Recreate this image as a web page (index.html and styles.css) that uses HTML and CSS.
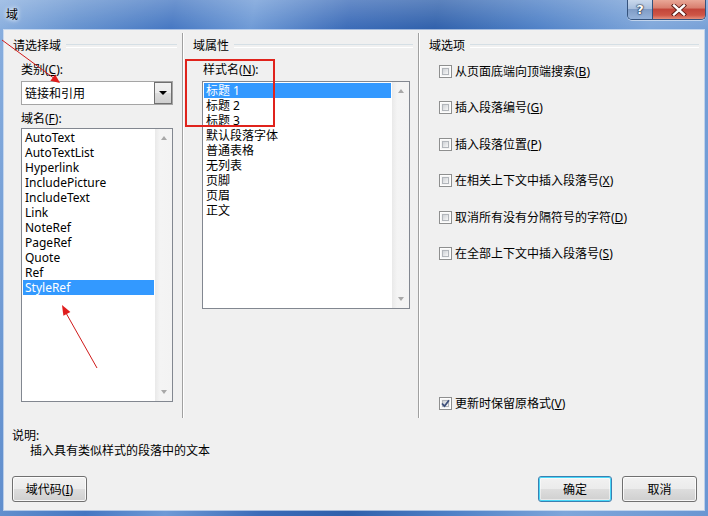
FILE: index.html
```html
<!DOCTYPE html>
<html lang="zh-CN">
<head>
<meta charset="utf-8">
<title>域</title>
<link rel="stylesheet" href="styles.css">
</head>
<body>
<div class="window">
  <div class="titlebar">
    <span class="title">域</span>
    <div class="caption-btns">
      <div class="cbtn help">?</div>
      <div class="cbtn close">
        <svg width="16" height="12" viewBox="0 0 16 12">
          <path d="M3 1.5 L13 10.5 M13 1.5 L3 10.5" stroke="#5a1a14" stroke-width="4.2" stroke-linecap="square"/>
          <path d="M3 1.5 L13 10.5 M13 1.5 L3 10.5" stroke="#ffffff" stroke-width="2.4" stroke-linecap="square"/>
        </svg>
      </div>
    </div>
  </div>
  <div class="client">
    <div class="columns">
      <section class="col col-left">
        <div class="group-head"><span>请选择域</span></div>
        <div class="label lbl-cat">类别(<u>C</u>):</div>
        <div class="combo">
          <span class="combo-text">链接和引用</span>
          <span class="combo-btn"><i class="tri-down dark"></i></span>
        </div>
        <div class="label lbl-name">域名(<u>F</u>):</div>
        <div class="listbox list-fields">
          <div class="items">
            <div class="item">AutoText</div>
            <div class="item">AutoTextList</div>
            <div class="item">Hyperlink</div>
            <div class="item">IncludePicture</div>
            <div class="item">IncludeText</div>
            <div class="item">Link</div>
            <div class="item">NoteRef</div>
            <div class="item">PageRef</div>
            <div class="item">Quote</div>
            <div class="item">Ref</div>
            <div class="item selected">StyleRef</div>
          </div>
          <div class="vscroll"><i class="tri-up"></i><i class="tri-down"></i></div>
        </div>
      </section>
      <section class="col col-mid">
        <div class="group-head"><span>域属性</span></div>
        <div class="label lbl-style">样式名(<u>N</u>):</div>
        <div class="listbox list-styles">
          <div class="items">
            <div class="item selected">标题 1</div>
            <div class="item">标题 2</div>
            <div class="item">标题 3</div>
            <div class="item">默认段落字体</div>
            <div class="item">普通表格</div>
            <div class="item">无列表</div>
            <div class="item">页脚</div>
            <div class="item">页眉</div>
            <div class="item">正文</div>
          </div>
          <div class="vscroll"><i class="tri-up"></i><i class="tri-down"></i></div>
        </div>
      </section>
      <section class="col col-right">
        <div class="group-head"><span>域选项</span></div>
        <div class="options">
          <label class="opt"><span class="cb"></span><span class="opt-text">从页面底端向顶端搜索(<u>B</u>)</span></label>
          <label class="opt"><span class="cb"></span><span class="opt-text">插入段落编号(<u>G</u>)</span></label>
          <label class="opt"><span class="cb"></span><span class="opt-text">插入段落位置(<u>P</u>)</span></label>
          <label class="opt"><span class="cb"></span><span class="opt-text">在相关上下文中插入段落号(<u>X</u>)</span></label>
          <label class="opt"><span class="cb"></span><span class="opt-text">取消所有没有分隔符号的字符(<u>D</u>)</span></label>
          <label class="opt"><span class="cb"></span><span class="opt-text">在全部上下文中插入段落号(<u>S</u>)</span></label>
        </div>
        <label class="opt opt-last"><span class="cb checked"><svg width="9" height="9" viewBox="0 0 9 9"><path d="M1 4.5 L3.5 7.2 L8 1.2" fill="none" stroke="#3d4f7a" stroke-width="1.8"/></svg></span><span class="opt-text">更新时保留原格式(<u>V</u>)</span></label>
      </section>
    </div>
    <div class="desc">
      <div class="desc-title">说明:</div>
      <div class="desc-text">插入具有类似样式的段落中的文本</div>
    </div>
    <div class="actions">
      <button class="btn">域代码(<u>I</u>)</button>
      <button class="btn default push">确定</button>
      <button class="btn">取消</button>
    </div>
  </div>
  <svg class="annotations" width="708" height="516" viewBox="0 0 708 516">
    <rect x="186" y="60" width="88" height="66" fill="none" stroke="#e0231c" stroke-width="2"/>
    <line x1="2" y1="40" x2="55" y2="79" stroke="#d01a1a" stroke-width="1"/>
    <polygon points="60,83 50.4,80.8 55.2,74.4" fill="#e01c1c"/>
    <line x1="97" y1="368" x2="66" y2="313" stroke="#d01a1a" stroke-width="1"/>
    <polygon points="62,305 70.4,311.9 63.4,315.7" fill="#e01c1c"/>
  </svg>
</div>
</body>
</html>
```

FILE: styles.css
```css
* { box-sizing: border-box; }
html, body { margin: 0; padding: 0; }
body {
  font-family: "Noto Sans", "Noto Sans CJK SC", sans-serif;
  font-size: 12px;
  line-height: 15px;
  color: #000;
  background: #fff;
}
u { text-decoration: underline; text-underline-offset: 1px; }

.window {
  position: relative;
  width: 708px;
  height: 516px;
  padding: 0 4px 6px 4px;
  display: flex;
  flex-direction: column;
  background:
    linear-gradient(to bottom, rgba(255,255,255,0.22), rgba(255,255,255,0) 30px),
    linear-gradient(100deg, #8bb0df 0%, #6592cf 10%, #4577c2 22%, #6e9ad6 32%, #3b6bb8 44%, #2f60ab 55%, #4f81c7 68%, #7ea6da 82%, #6a96d2 100%);
}

.titlebar {
  height: 30px;
  display: flex;
  align-items: flex-start;
}
.title {
  margin: 7px 0 0 2px;
  color: #000;
  text-shadow: 0 0 4px #fff, 0 0 6px rgba(255,255,255,0.8);
}
.caption-btns {
  margin-left: auto;
  margin-right: -2px;
  display: flex;
  height: 20px;
  border: 1px solid #34527c;
  border-top: none;
  border-radius: 0 0 5px 5px;
  overflow: hidden;
  box-shadow: 0 1px 0 rgba(255,255,255,0.5);
}
.cbtn {
  height: 19px;
  display: flex;
  align-items: center;
  justify-content: center;
}
.help {
  width: 25px;
  border-right: 1px solid #34527c;
  background: linear-gradient(#c9d8ec, #a9bfdd 45%, #7f9cc6 50%, #96b3da 100%);
  color: #fff;
  font-family: "DejaVu Sans", sans-serif;
  font-weight: bold;
  font-size: 13px;
  text-shadow: 0 0 2px #12213a, 0 0 1px #12213a, 0 0 1px #12213a;
}
.close {
  width: 52px;
  background: linear-gradient(#e9a797, #d98070 40%, #c3463a 50%, #cf5646 80%, #e48f7c 100%);
}

.client {
  flex: 1;
  background: #f0f0f0;
  display: flex;
  flex-direction: column;
  outline: 1px solid rgba(255,255,255,0.55);
}

.columns {
  display: flex;
  margin-top: 3px;
  height: 385px;
}
.col {
  display: flex;
  flex-direction: column;
  padding-top: 5px;
}
.col-left { width: 178px; padding-left: 9px; }
.col-mid {
  width: 236px;
  padding-left: 10px;
  border-left: 1px solid #a0a0a0;
  box-shadow: inset 1px 0 0 #fff;
}
.col-right {
  flex: 1;
  padding-left: 10px;
  padding-bottom: 7px;
  border-left: 1px solid #a0a0a0;
  box-shadow: inset 1px 0 0 #fff;
}

.group-head {
  display: flex;
  align-items: center;
  height: 15px;
  margin-right: 5px;
}
.group-head::after {
  content: "";
  flex: 1;
  margin-left: 5px;
  height: 2px;
  border-top: 1px solid #d5dfe5;
  border-bottom: 1px solid #fff;
}

.label { height: 15px; }
.lbl-cat { margin: 9px 0 0 8px; }
.lbl-name { margin: 6px 0 0 8px; }
.lbl-style { margin: 9px 0 0 10px; }

.combo {
  margin: 4px 0 0 8px;
  width: 152px;
  height: 24px;
  border: 1px solid #a5a5a5;
  background: #fff;
  display: flex;
  align-items: center;
}
.combo-text { flex: 1; padding-left: 3px; }
.combo-btn {
  width: 18px;
  height: 22px;
  border: 1px solid #707070;
  background: linear-gradient(#f2f2f2, #ebebeb 50%, #dddddd 51%, #cfcfcf);
  display: flex;
  align-items: center;
  justify-content: center;
}

.listbox {
  border: 1px solid #828790;
  background: #fff;
  display: flex;
}
.list-fields { margin: 2px 0 0 8px; width: 152px; height: 274px; }
.list-styles { margin: 4px 0 0 9px; width: 208px; height: 228px; }
.items { flex: 1; padding: 1px 1px; }
.item { height: 15px; padding-left: 2px; white-space: nowrap; }
.item.selected { background: #3399ff; color: #fff; }
.vscroll {
  width: 17px;
  background: linear-gradient(to right, #e9e9e9, #f4f4f4 30%, #f3f3f3);
  display: flex;
  flex-direction: column;
  justify-content: space-between;
  align-items: center;
  padding: 7px 0 7px;
}
.tri-up, .tri-down {
  display: block;
  width: 0;
  height: 0;
  border-left: 3.5px solid transparent;
  border-right: 3.5px solid transparent;
}
.tri-up { border-bottom: 4px solid #a8a8a8; }
.tri-down { border-top: 4px solid #a8a8a8; }
.tri-down.dark { border-top-color: #000; border-left-width: 4px; border-right-width: 4px; }

.options {
  display: flex;
  flex-direction: column;
  gap: 21.6px;
  margin-top: 10.5px;
}
.opt {
  display: flex;
  align-items: center;
  height: 15px;
  margin-left: 10px;
  gap: 3px;
  white-space: nowrap;
}
.opt-last { margin-top: auto; }
.cb {
  width: 13px;
  height: 13px;
  flex: none;
  border: 1px solid #8e8f8f;
  background: #f4f4f4;
  box-shadow: inset 0 0 0 1px #fdfdfd;
  position: relative;
  display: flex;
  align-items: center;
  justify-content: center;
}
.cb::before {
  content: "";
  position: absolute;
  left: 2px; top: 2px; right: 2px; bottom: 2px;
  border: 1px solid #b2b6bb;
  background: linear-gradient(135deg, #cfd2d6, #f7f7f7);
}
.cb svg { position: relative; }

.desc { margin-top: 9.5px; padding-left: 8px; }
.desc-title, .desc-text { height: 15px; }
.desc-text { padding-left: 18px; }

.actions {
  display: flex;
  margin-top: 18.5px;
  padding: 0 7px 0 8px;
  gap: 10px;
}
.btn {
  width: 75px;
  height: 26px;
  font: inherit;
  color: #000;
  border: 1px solid #707070;
  border-radius: 3px;
  background: linear-gradient(#f2f2f2, #ebebeb 50%, #dddddd 51%, #cfcfcf);
  box-shadow: inset 0 0 0 1px rgba(255,255,255,0.8);
  padding: 0;
}
.btn.default {
  width: 74px;
  border-color: #3c7fb1;
  box-shadow: inset 0 0 0 1px #48d8f8, inset 0 0 0 2px rgba(255,255,255,0.5);
}
.push { margin-left: auto; }

.annotations {
  position: absolute;
  left: 0;
  top: 0;
  pointer-events: none;
}
```
